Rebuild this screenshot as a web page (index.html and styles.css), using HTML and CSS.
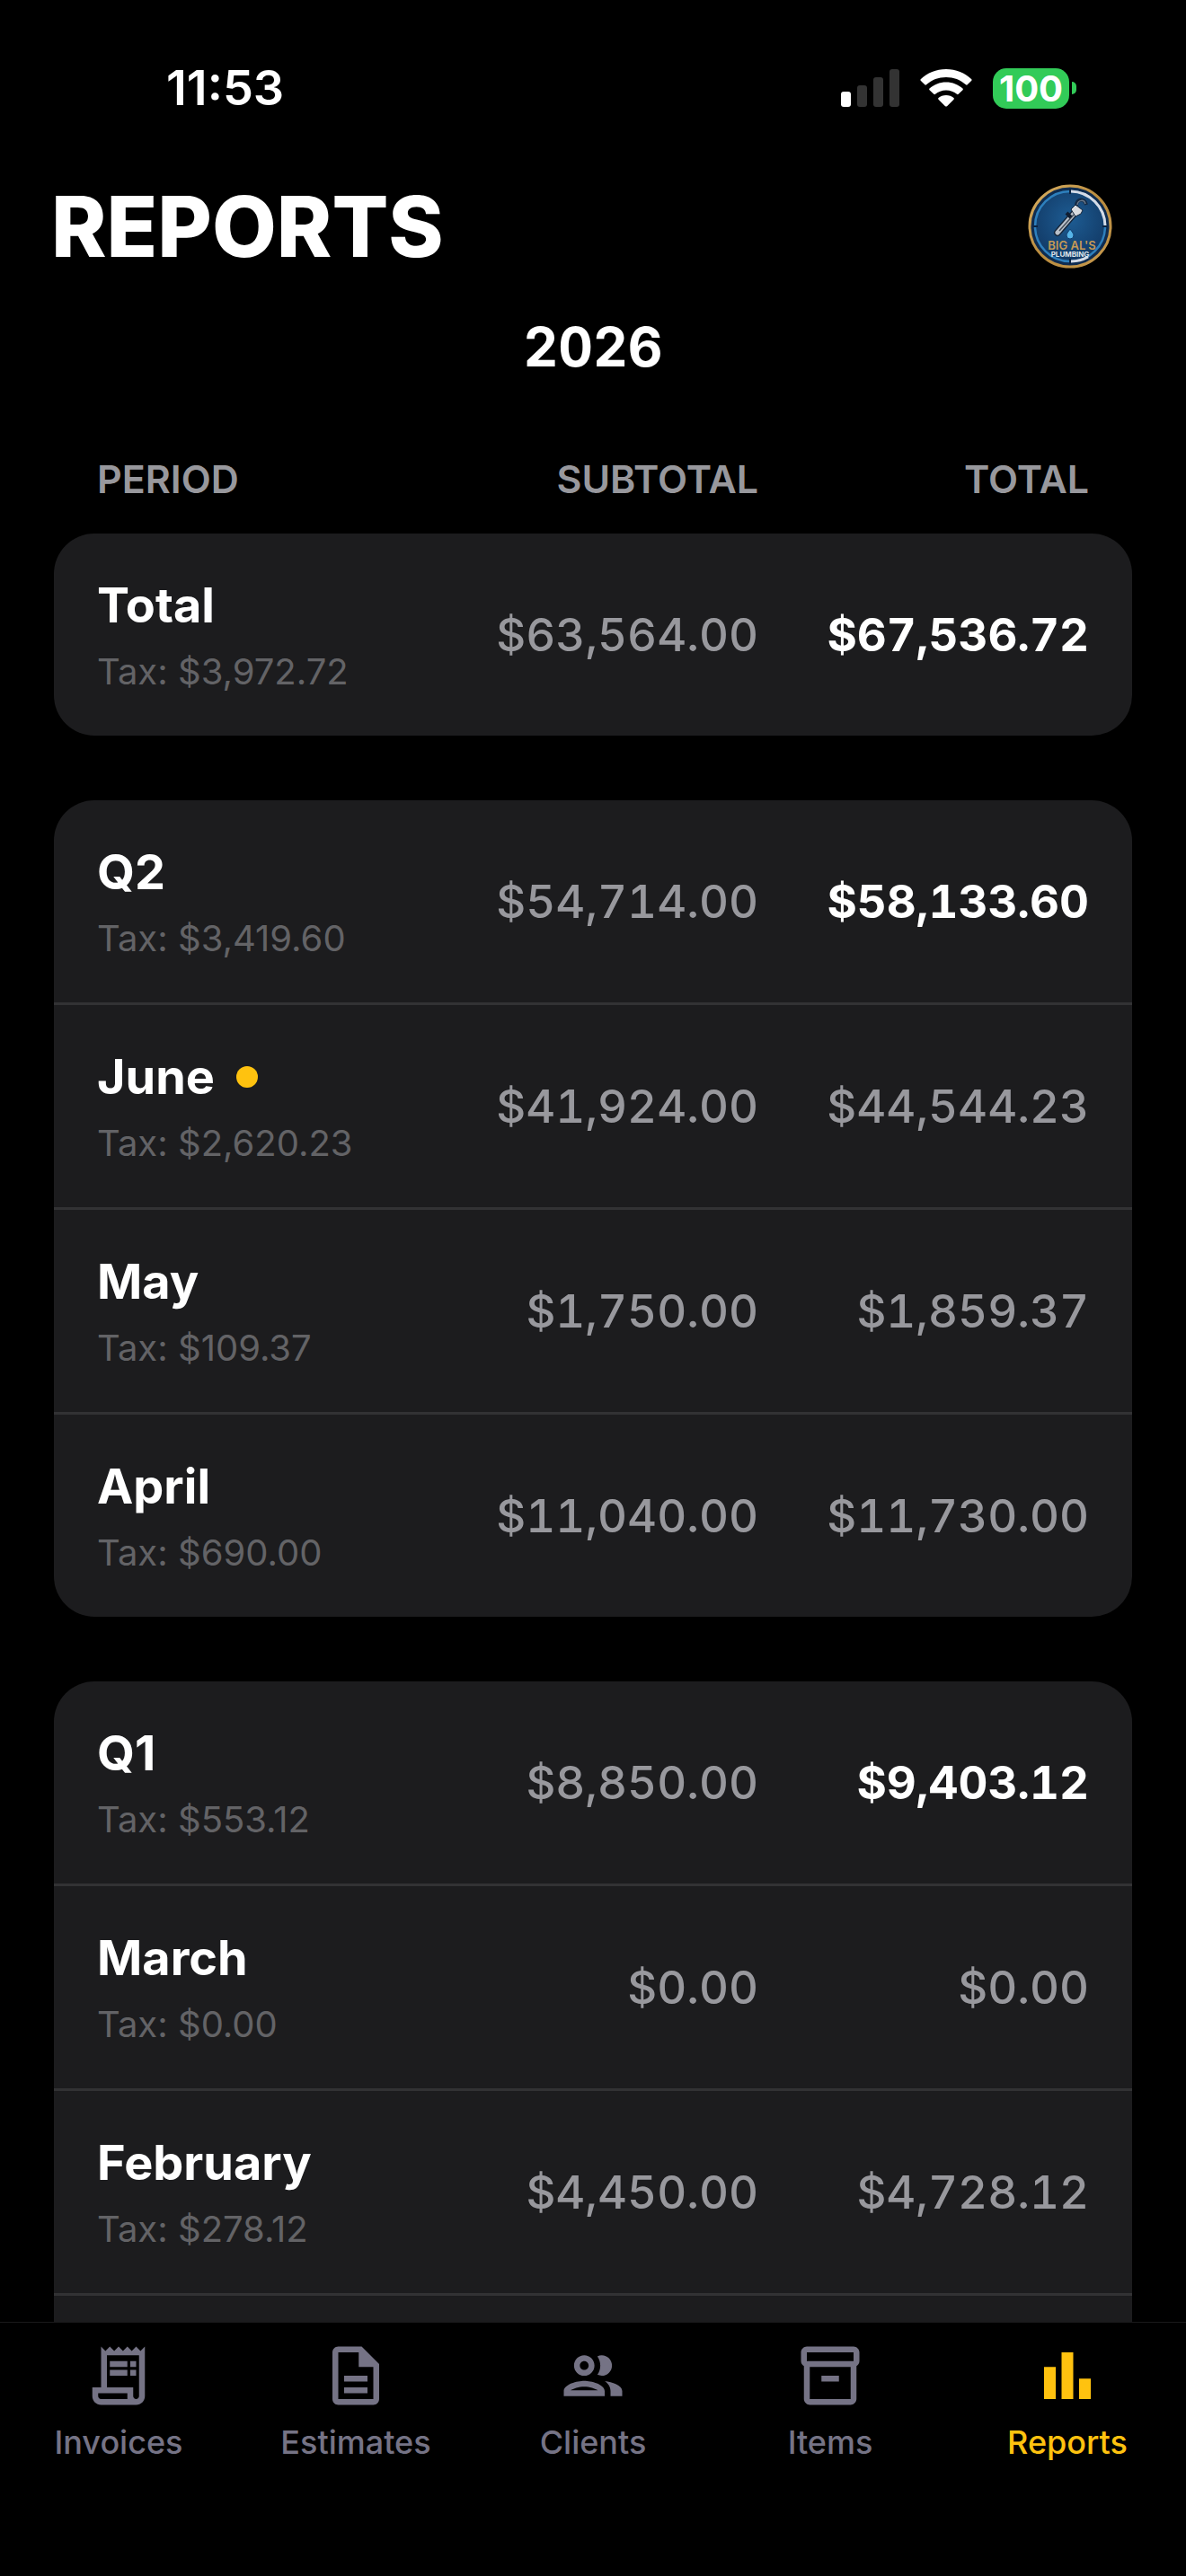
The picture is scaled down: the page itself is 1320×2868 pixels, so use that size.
FILE: index.html
```html
<!DOCTYPE html>
<html lang="en">
<head>
<meta charset="utf-8">
<meta name="viewport" content="width=device-width, initial-scale=1">
<title>Reports</title>
<link rel="stylesheet" href="styles.css">
</head>
<body>
<div class="status-bar">
  <time class="status-time">11:53</time>
  <div class="status-icons">
    <svg class="signal" viewBox="0 0 65 42" aria-label="Signal">
      <rect x="0" y="25" width="11" height="17" rx="3" fill="#fff"/>
      <rect x="18" y="18" width="11" height="24" rx="3" fill="#333"/>
      <rect x="36" y="9" width="11" height="33" rx="3" fill="#333"/>
      <rect x="54" y="0" width="11" height="42" rx="3" fill="#333"/>
    </svg>
    <svg class="wifi" viewBox="0 0 58 42" fill="#fff" aria-label="Wi-Fi">
      <path d="M29 0C40 0 50 4.200 57.300 11.200Q58 12 57.300 12.800L52.700 17.300Q51.900 18 51 17.300C45 11.900 37.400 9 29 9S13 11.900 7 17.300Q6.100 18 5.300 17.300L.7 12.800Q0 12 .7 11.200C8 4.200 18 0 29 0Z"/>
      <path d="M29 14.500C36.200 14.500 42.700 17.200 47.500 21.600Q48.300 22.400 47.500 23.200L42.700 27.800Q41.900 28.500 41 27.800C37.800 25 33.600 23.400 29 23.400S20.200 25 17 27.800Q16.100 28.500 15.300 27.800L10.500 23.200Q9.700 22.400 10.500 21.600C15.300 17.200 21.800 14.500 29 14.500Z"/>
      <path d="M29 29C32.300 29 35.300 30.200 37.500 32.100Q38.300 32.900 37.500 33.700L30 41.200Q29 42 28 41.200L20.500 33.700Q19.700 32.900 20.500 32.100C22.700 30.200 25.700 29 29 29Z"/>
    </svg>
    <div class="battery"><span class="battery-level">100</span><span class="battery-cap"></span></div>
  </div>
</div>

<header class="page-header">
  <h1 class="page-title">REPORTS</h1>
  <button class="account" type="button" aria-label="Big Al's Plumbing">
    <svg class="account-logo" viewBox="0 0 96 96">
      <defs>
        <radialGradient id="badge" cx=".5" cy=".4" r=".6"><stop offset="0" stop-color="#1d5c93"/><stop offset="1" stop-color="#123a66"/></radialGradient>
        <linearGradient id="gold" x1="0" y1="0" x2="1" y2="1"><stop offset="0" stop-color="#d9b062"/><stop offset=".5" stop-color="#b98b3e"/><stop offset="1" stop-color="#c79a4e"/></linearGradient>
      </defs>
      <circle cx="48" cy="48" r="45" fill="#0f2c50" stroke="url(#gold)" stroke-width="3"/>
      <circle cx="48" cy="48" r="39" fill="url(#badge)" stroke="#2e80bd" stroke-width="2.500"/>
      <path d="M49 9a39 39 0 0 1 38 38" fill="none" stroke="#d5dbe6" stroke-width="3"/>
      <path d="M49 87a39 39 0 0 0 19-5" fill="none" stroke="#d5dbe6" stroke-width="3"/>
      <path d="M48 6v6M7 48h5M84 48h5M48 84v6" stroke="#0b2342" stroke-width="2"/>
      <path d="M34 55 53 33" stroke="#15263b" stroke-width="8" stroke-linecap="round"/>
      <path d="M34 55 53 33" stroke="#b9c0c9" stroke-width="5" stroke-linecap="round"/>
      <path d="M36 53 52 35" stroke="#454e5a" stroke-width="1.500"/>
      <path d="m49 29 5-5 8 6-2 4-6 3z" fill="#d8dbe0" stroke="#15263b"/>
      <path d="M55 25c0-8 9-9 11-1" fill="none" stroke="#152a44" stroke-width="4"/>
      <path d="M56 24c1-6 8-6 9-1" fill="none" stroke="#68788b" stroke-width="1.500"/>
      <path d="m44 33 5 5" stroke="#101d30" stroke-width="4"/>
      <path d="M48 51c2 3 4 5 4 7a4 4 0 0 1-8 0c0-2 2-4 4-7z" fill="#56b4e8" stroke="#123f70"/>
      <text x="50" y="74" class="logo-name">BIG AL'S</text>
      <text x="48" y="82" class="logo-trade">PLUMBING</text>
    </svg>
  </button>
</header>

<main class="content">
  <h2 class="year">2026</h2>
  <table class="report">
    <thead>
      <tr class="report-head"><th scope="col">PERIOD</th><th scope="col">SUBTOTAL</th><th scope="col">TOTAL</th></tr>
    </thead>
    <tbody class="card">
      <tr class="row row-sum"><th scope="row"><span class="name">Total</span><span class="tax">Tax: $3,972.72</span></th><td>$63,564.00</td><td>$67,536.72</td></tr>
    </tbody>
    <tbody class="card">
      <tr class="row row-sum"><th scope="row"><span class="name">Q2</span><span class="tax">Tax: $3,419.60</span></th><td>$54,714.00</td><td>$58,133.60</td></tr>
      <tr class="row"><th scope="row"><span class="name name-current">June</span><span class="tax">Tax: $2,620.23</span></th><td>$41,924.00</td><td>$44,544.23</td></tr>
      <tr class="row"><th scope="row"><span class="name">May</span><span class="tax">Tax: $109.37</span></th><td>$1,750.00</td><td>$1,859.37</td></tr>
      <tr class="row"><th scope="row"><span class="name">April</span><span class="tax">Tax: $690.00</span></th><td>$11,040.00</td><td>$11,730.00</td></tr>
    </tbody>
    <tbody class="card card-continued">
      <tr class="row row-sum"><th scope="row"><span class="name">Q1</span><span class="tax">Tax: $553.12</span></th><td>$8,850.00</td><td>$9,403.12</td></tr>
      <tr class="row"><th scope="row"><span class="name">March</span><span class="tax">Tax: $0.00</span></th><td>$0.00</td><td>$0.00</td></tr>
      <tr class="row"><th scope="row"><span class="name">February</span><span class="tax">Tax: $278.12</span></th><td>$4,450.00</td><td>$4,728.12</td></tr>
    </tbody>
  </table>
</main>

<nav class="tab-bar">
  <a class="tab" href="#invoices"><svg class="tab-icon" viewBox="0 0 24 24"><path d="M19.500 3.500L18 2l-1.500 1.500L15 2l-1.500 1.500L12 2l-1.500 1.500L9 2 7.500 3.500 6 2v14H3v3c0 1.660 1.340 3 3 3h12c1.660 0 3-1.340 3-3V2l-1.500 1.500zM15 20H6c-.55 0-1-.45-1-1v-1h10v2zm4-1c0 .55-.45 1-1 1s-1-.45-1-1v-3H8V5h11v14z"/><path d="M9 7h6v2H9zm7 0h2v2h-2zm-7 3h6v2H9zm7 0h2v2h-2z"/></svg>Invoices</a>
  <a class="tab" href="#estimates"><svg class="tab-icon" viewBox="0 0 24 24"><path d="M8 16h8v2H8zm0-4h8v2H8zm6-10H6c-1.100 0-2 .9-2 2v16c0 1.100.89 2 1.990 2H18c1.100 0 2-.9 2-2V8l-6-6zm4 18H6V4h7v5h5v11z"/></svg>Estimates</a>
  <a class="tab" href="#clients"><svg class="tab-icon" viewBox="0 0 24 24"><path d="M9 13.750c-2.340 0-7 1.170-7 3.500V19h14v-1.750c0-2.330-4.660-3.500-7-3.500zM4.340 17c.84-.58 2.870-1.250 4.660-1.250s3.820.67 4.660 1.250H4.340zM9 12c1.930 0 3.500-1.570 3.500-3.500S10.930 5 9 5 5.500 6.570 5.500 8.500 7.070 12 9 12zm0-5c.83 0 1.500.67 1.500 1.500S9.830 10 9 10s-1.500-.67-1.500-1.500S8.170 7 9 7zm7.040 6.810c1.160.84 1.960 1.960 1.960 3.440V19h4v-1.750c0-2.020-3.500-3.170-5.960-3.440zM15 12c1.930 0 3.500-1.570 3.500-3.500S16.930 5 15 5c-.54 0-1.040.13-1.500.35.63.89 1 1.980 1 3.150s-.37 2.260-1 3.150c.46.22.96.35 1.500.35z"/></svg>Clients</a>
  <a class="tab" href="#items"><svg class="tab-icon" viewBox="0 0 24 24"><path d="M20 2H4c-1 0-2 .9-2 2v3.010c0 .72.43 1.340 1 1.690V20c0 1.100 1.100 2 2 2h14c.9 0 2-.9 2-2V8.700c.57-.35 1-.97 1-1.690V4c0-1.100-1-2-2-2zm-1 18H5V9h14v11zm1-13H4V4h16v3z"/><path d="M9 12h6v2H9z"/></svg>Items</a>
  <a class="tab tab-active" href="#reports" aria-current="page"><svg class="tab-icon" viewBox="0 0 24 24"><path d="M4 9h4v11H4zm12 4h4v7h-4zM10 4h4v16h-4z"/></svg>Reports</a>
</nav>
</body>
</html>
```
FILE: styles.css
```css
* {
  box-sizing: border-box;
}

body {
  margin: 0;
  height: 100vh;
  display: flex;
  flex-direction: column;
  background: #000;
  color: #fff;
  font-family: Inter, "Liberation Sans", sans-serif;
  font-optical-sizing: none;
}

.status-bar {
  flex: none;
  display: flex;
  justify-content: space-between;
  align-items: center;
  padding: 65px 122px 0 185px;
}

.status-time {
  font-size: 54px;
  line-height: 66px;
  font-weight: 600;
}

.status-icons {
  display: flex;
  align-items: center;
  gap: 23px;
}

.signal {
  width: 65px;
  height: 42px;
}

.wifi {
  width: 58px;
  height: 42px;
}

.battery {
  display: flex;
  align-items: center;
  gap: 3px;
}

.battery-level {
  width: 85px;
  border-radius: 15px;
  background: #32cb58;
  font-size: 40px;
  line-height: 45px;
  font-weight: 700;
  font-optical-sizing: auto;
  text-align: center;
}

.battery-cap {
  width: 5px;
  height: 14px;
  border-radius: 0 5px 5px 0;
  background: #32cb58;
}

.page-header {
  flex: none;
  display: flex;
  justify-content: space-between;
  align-items: center;
  padding: 69px 81px 0 57px;
}

.page-title {
  margin: 0;
  font-size: 93px;
  line-height: 104px;
  font-weight: 800;
}

.account {
  padding: 0;
  border: 0;
  border-radius: 50%;
  background: none;
}

.account-logo {
  display: block;
  width: 96px;
  height: 96px;
}

.logo-name {
  font: 600 13px Inter, sans-serif;
  fill: #c69a55;
  text-anchor: middle;
}

.logo-trade {
  font: 700 8px Inter, sans-serif;
  fill: #dfe4ea;
  text-anchor: middle;
}

.content {
  flex: 1;
  min-height: 0;
  overflow: hidden auto;
  scrollbar-width: none;
  padding: 46px 60px 0;
}

.year {
  margin: 0;
  font-size: 60px;
  line-height: 72px;
  font-weight: 700;
  font-variant-numeric: tabular-nums;
  text-align: center;
}

.report {
  display: flex;
  flex-direction: column;
  gap: 72px;
}

.report thead {
  display: block;
  margin-bottom: -72px;
  padding: 84px 0 34px;
}

.report-head,
.row {
  display: grid;
  grid-template-columns: repeat(3, 1fr);
  align-items: center;
  padding: 0 48px;
}

.report th,
.report td {
  padding: 0;
  text-align: right;
}

.report th:first-child {
  text-align: left;
}

.report-head {
  color: #98989d;
  font-size: 43px;
  line-height: 54px;
}

.report-head th {
  font-weight: 600;
}

.card {
  display: block;
  overflow: hidden;
  border-radius: 45px;
  background: #1c1c1e;
}

/* The list carries on beneath the tab bar. */
.card-continued {
  border-radius: 45px 45px 0 0;
}

.card-continued::after {
  content: "";
  display: block;
  height: 48px;
  border-top: 3px solid #323234;
}

.row {
  padding-top: 45px;
  padding-bottom: 45px;
  color: #98989d;
  font-size: 51px;
  line-height: 60px;
}

.row + .row {
  border-top: 3px solid #323234;
}

.row td {
  font-weight: 500;
  font-variant-numeric: tabular-nums;
}

.row-sum td:last-child {
  color: #fff;
  font-weight: 700;
}

.name,
.tax {
  display: flex;
  align-items: center;
}

.name {
  gap: 24px;
  margin-bottom: 14px;
  color: #fff;
  font-size: 54px;
  line-height: 69px;
  font-weight: 700;
}

.name-current::after {
  content: "";
  width: 24px;
  height: 24px;
  border-radius: 50%;
  background: #ffc20f;
}

.tax {
  color: #636366;
  font-size: 40px;
  line-height: 52px;
  font-weight: 400;
}

.tab-bar {
  flex: none;
  display: grid;
  grid-template-columns: repeat(5, 1fr);
  padding: 20px 0 126px;
  border-top: 1px solid #1a1a1b;
  background: #000;
}

.tab {
  display: flex;
  flex-direction: column;
  align-items: center;
  gap: 12px;
  color: #757385;
  font-size: 36px;
  line-height: 46px;
  font-weight: 500;
  text-decoration: none;
}

.tab-active {
  color: #ffc20f;
}

.tab-icon {
  width: 78px;
  height: 78px;
  fill: currentColor;
}
```
